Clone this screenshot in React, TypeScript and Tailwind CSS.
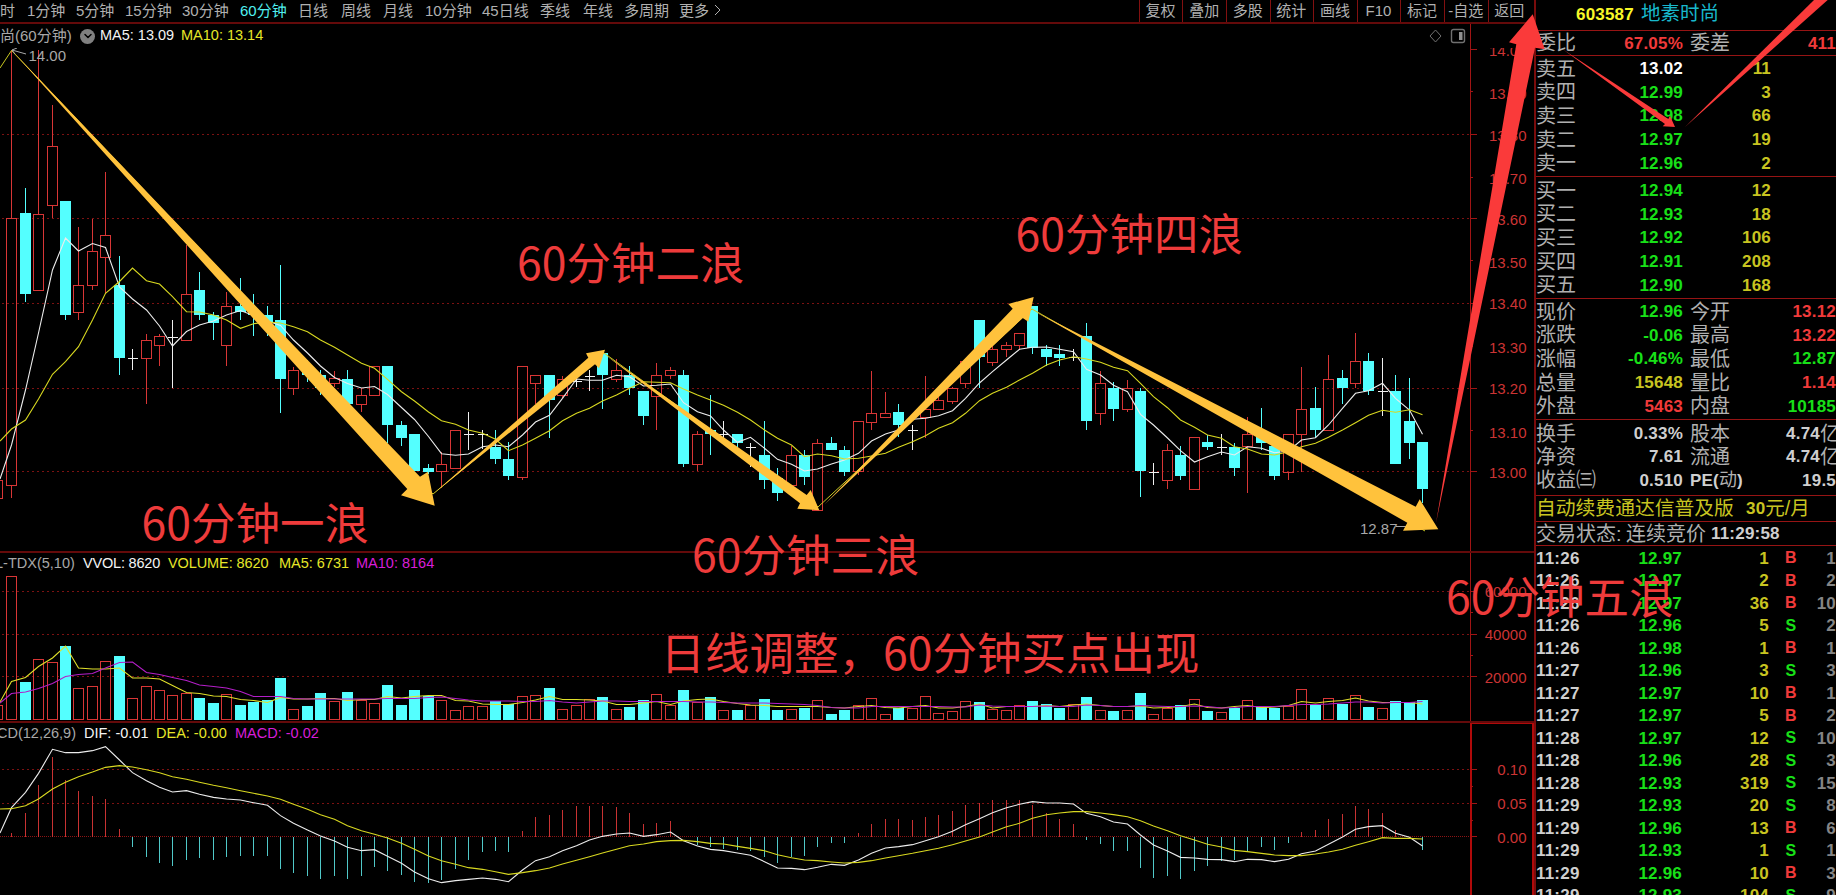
import React from 'react'
import { ChevronDown } from 'lucide-react'

type Kind = 'r' | 'c' | 'w'
type Candle = [Kind, number, number, number, number]

interface Tick {
  time: string
  price: string
  volume: string
  side: 'B' | 'S'
  count: string
}

const periods = [
  { label: '时', width: 'w-[27px]' },
  { label: '1分钟', width: 'w-[49px]' },
  { label: '5分钟', width: 'w-[49px]' },
  { label: '15分钟', width: 'w-[57px]' },
  { label: '30分钟', width: 'w-[58px]' },
  { label: '60分钟', width: 'w-[58px]', active: true },
  { label: '日线', width: 'w-[43px]' },
  { label: '周线', width: 'w-[42px]' },
  { label: '月线', width: 'w-[42px]' },
  { label: '10分钟', width: 'w-[57px]' },
  { label: '45日线', width: 'w-[58px]' },
  { label: '季线', width: 'w-[43px]' },
  { label: '年线', width: 'w-[41px]' },
  { label: '多周期', width: 'w-[55px]' },
  { label: '更多', width: 'w-[35px]' },
]

const tools = ['复权', '叠加', '多股', '统计', '画线', 'F10', '标记', '-自选', '返回']

// kind, high, body top, body bottom, low
const candles: Candle[] = [
  ['r', 50, 218, 486, 498], ['c', 188, 213, 294, 302], ['r', 50, 214, 291, 291], ['r', 105, 146, 206, 218],
  ['c', 201, 201, 315, 320], ['r', 227, 285, 313, 320], ['r', 219, 251, 286, 290], ['r', 172, 235, 258, 294],
  ['c', 256, 285, 358, 375], ['w', 349, 358, 358, 370], ['r', 334, 340, 359, 404], ['r', 334, 336, 346, 366],
  ['w', 320, 337, 337, 388], ['r', 245, 294, 341, 341], ['c', 272, 290, 315, 320], ['c', 312, 315, 323, 340],
  ['r', 292, 306, 346, 366], ['c', 278, 306, 312, 320], ['c', 294, 311, 315, 336], ['c', 306, 315, 323, 336],
  ['c', 265, 320, 379, 413], ['r', 367, 370, 389, 395], ['c', 360, 370, 375, 382], ['c', 370, 375, 388, 395],
  ['r', 371, 378, 384, 387], ['c', 370, 379, 404, 404], ['r', 388, 395, 405, 412], ['r', 366, 366, 396, 396],
  ['c', 366, 366, 425, 443], ['c', 421, 425, 438, 446], ['c', 434, 434, 471, 471], ['c', 464, 468, 472, 474],
  ['r', 452, 464, 472, 488], ['r', 430, 430, 469, 469], ['w', 412, 434, 434, 450], ['w', 430, 434, 434, 449],
  ['c', 430, 447, 459, 464], ['c', 442, 459, 476, 480], ['r', 366, 366, 478, 480], ['r', 375, 375, 384, 404],
  ['c', 375, 375, 400, 438], ['r', 376, 379, 396, 398], ['w', 376, 381, 381, 387], ['w', 370, 376, 376, 391],
  ['c', 353, 353, 375, 409], ['r', 359, 370, 380, 382], ['c', 366, 375, 388, 395], ['c', 391, 391, 416, 425],
  ['r', 363, 375, 397, 430], ['r', 367, 370, 376, 379], ['c', 370, 375, 464, 467], ['r', 431, 434, 465, 471],
  ['c', 395, 430, 434, 455], ['w', 421, 434, 434, 438], ['c', 434, 434, 443, 450], ['w', 443, 447, 447, 467],
  ['c', 421, 455, 480, 489], ['c', 468, 478, 493, 501], ['r', 446, 455, 486, 486], ['c', 450, 455, 477, 485],
  ['r', 439, 443, 511, 511], ['c', 437, 443, 450, 450], ['c', 446, 450, 472, 476], ['r', 421, 421, 472, 475],
  ['r', 371, 413, 423, 430], ['r', 392, 413, 418, 418], ['c', 404, 412, 425, 437], ['w', 425, 430, 430, 450],
  ['r', 376, 409, 418, 438], ['r', 395, 400, 410, 410], ['r', 387, 388, 402, 404], ['r', 361, 361, 384, 388],
  ['c', 320, 320, 357, 388], ['r', 345, 349, 363, 366], ['r', 342, 345, 350, 357], ['r', 333, 333, 346, 350],
  ['c', 306, 306, 348, 354], ['c', 345, 349, 357, 366], ['c', 345, 354, 358, 366], ['w', 349, 357, 357, 361],
  ['c', 323, 336, 421, 430], ['r', 371, 383, 414, 425], ['c', 382, 388, 409, 421], ['r', 380, 388, 410, 412],
  ['c', 388, 391, 471, 497], ['w', 463, 472, 472, 485], ['r', 444, 450, 481, 489], ['c', 446, 455, 476, 480],
  ['r', 437, 437, 490, 490], ['c', 435, 442, 447, 450], ['w', 434, 447, 447, 455], ['c', 443, 447, 468, 476],
  ['r', 417, 434, 447, 493], ['c', 408, 434, 443, 450], ['c', 443, 446, 476, 480], ['r', 434, 434, 473, 480],
  ['r', 367, 409, 435, 472], ['c', 387, 408, 430, 438], ['r', 355, 379, 431, 431], ['c', 370, 378, 388, 404],
  ['r', 333, 361, 384, 388], ['c', 353, 361, 391, 395], ['w', 358, 391, 391, 416], ['c', 375, 391, 464, 464],
  ['c', 378, 421, 443, 459], ['c', 442, 442, 489, 503],
]

const ma5 = [
  445, 390, 333, 270, 238, 251, 243.5, 247.5, 287, 299, 310, 326, 346, 331.5, 325, 321, 315, 310.5, 315.5, 321,
  325.5, 340, 353, 366, 377.5, 383.5, 388, 386.5, 394.5, 407.5, 419.5, 436.5, 453.7, 455.3, 454, 446.7, 445,
  446.7, 435, 422, 415.3, 398.3, 379, 380.3, 380.3, 375.3, 376.7, 386, 385.3, 384, 402.7, 411.7, 416, 430, 442.3,
  437.3, 448.3, 459.3, 464.3, 471, 469, 464, 460, 453.3, 441, 434, 430, 419.3, 418.3, 415.7, 410.7, 398.3, 383,
  371.7, 360, 349.3, 347.3, 347, 349.3, 351.7, 369.3, 375, 385.3, 391.7, 414.3, 425, 438, 450.7, 462, 456.7, 452,
  455, 446.7, 448.3, 452.7, 451, 440, 437.7, 425, 408.3, 393.3, 390.7, 383.3, 398.3, 410, 434.3,
]

const ma10 = [
  429, 420, 399, 374.3, 361.7, 346.7, 320, 293.3, 281.5, 268, 280.7, 284, 296.7, 311.7, 312, 315, 320, 328.3,
  323.7, 322, 323, 326.7, 331.7, 340, 347.3, 355, 363.3, 368.3, 379.3, 391.7, 401, 412, 420.7, 424.3, 430, 433.3,
  439.3, 450.7, 445, 438.3, 430.7, 420.7, 413.3, 408.3, 401, 395, 388.3, 381.7, 382.3, 382.7, 389, 395, 400,
  405.3, 412.3, 420, 430, 438.3, 445, 456.7, 454, 455.7, 459, 458.3, 456, 453.3, 447.3, 441.7, 435.7, 428.3,
  422.7, 413.3, 400.7, 393.3, 387.3, 380, 373.3, 365, 360, 356.7, 359, 362.3, 367.3, 370.7, 383.3, 396.7, 407.7,
  420, 427.3, 435, 438.3, 446.7, 449, 454, 455, 451.7, 446.7, 443.3, 437.3, 430, 422.7, 415.3, 410.3, 412.3,
  409.7, 414.7,
]

const volumeTops = [
  576, 682, 659, 662, 646, 688, 686, 661, 656, 698, 686, 690, 695, 693, 698, 703, 694, 705, 702, 700, 678, 709, 706,
  693, 701, 692, 700, 703, 685, 705, 690, 696, 700, 710, 706, 706, 701, 704, 696, 695, 688, 709, 705, 699, 697, 709,
  707, 700, 694, 705, 690, 702, 697, 710, 710, 705, 699, 710, 709, 708, 700, 714, 710, 705, 698, 714, 708, 708, 696,
  713, 711, 701, 702, 709, 710, 705, 701, 704, 708, 704, 697, 710, 711, 710, 693, 714, 708, 705, 699, 711, 712, 708,
  700, 707, 708, 706, 689, 705, 698, 704, 695, 707, 708, 701, 702, 700,
]

const volumeMa5 = [
  681.5, 677.5, 666.5, 658, 646, 668, 669, 669, 668, 678, 678, 679, 685.5, 692.5, 693.5, 696, 696.5, 699.5, 700.5,
  702.5, 697.5, 699, 699, 698.5, 698.5, 700.5, 699.5, 699.5, 696.5, 698, 696.5, 695.5, 695.5, 700.5, 701, 704,
  704.5, 704.5, 702.5, 700, 696.5, 699.5, 699.5, 700, 701, 704.5, 704.5, 703, 701.5, 704.5, 701, 699.5, 699, 701.5,
  703.5, 705, 705.5, 706.5, 706.5, 706.5, 706.5, 707.5, 708, 706.5, 705.5, 707.5, 708, 706.5, 705.5, 708, 708, 706.5,
  704, 708, 706.5, 706.5, 706.5, 705.5, 706.5, 705, 704, 705.5, 706.5, 706.5, 706, 708, 707.5, 706.5, 704, 707.5,
  708, 706.5, 705.5, 707.5, 707, 705.5, 701.5, 703, 701.5, 700.5, 698, 701, 702.5, 702.5, 702.5, 704,
]

const volumeMa10 = [
  693.5, 692, 688.5, 683.5, 676.5, 674.5, 673.5, 668, 662.5, 662, 672.5, 674.5, 677.5, 680.5, 685, 686.5, 688, 691.5,
  696.5, 696.5, 696.5, 698.5, 699, 699, 699, 699, 699, 699, 698.5, 698.5, 698.5, 697.5, 697, 698.5, 700, 701, 701, 701,
  701.5, 701.5, 700.5, 702, 703, 702, 701, 701, 701.5, 701.5, 701.5, 701.5, 701.5, 702, 702, 702.5, 703, 703, 703,
  703.5, 704, 704.5, 705.5, 707.5, 708, 708, 706.5, 706.5, 706.5, 706.5, 706.5, 706.5, 707, 707, 705, 706, 706.5, 706.5,
  706.5, 706, 706.5, 706.5, 705, 705.5, 706.5, 706.5, 705.5, 706, 706.5, 706.5, 706, 706.5, 708, 707.5, 706.5, 706.5,
  706.5, 705.5, 704.5, 704.5, 704, 703, 702, 702, 703, 702.5, 702.5, 701.5,
]

// MACD series are kept in thirds of a pixel below y = 540
const macdBars = [
  878, 818, 735, 652, 720, 753, 768, 776, 866, 922, 952, 970, 978, 960, 955, 960, 952, 948, 948, 948, 986, 1000, 1008,
  1016, 1008, 1016, 1008, 982, 993, 1004, 1027, 1030, 1020, 986, 960, 937, 934, 937, 873, 832, 825, 810, 798, 798,
  798, 802, 818, 852, 848, 844, 890, 916, 922, 927, 930, 934, 952, 970, 950, 948, 922, 908, 908, 878, 852, 836, 836,
  840, 832, 825, 813, 795, 788, 780, 780, 780, 795, 818, 836, 852, 900, 911, 934, 934, 983, 1013, 1008, 1016, 993,
  978, 963, 960, 934, 922, 930, 908, 877, 870, 836, 821, 798, 806, 818, 870, 890, 930,
]

const dif = [
  803, 757, 700, 628, 638, 638, 632, 620, 660, 698, 722, 742, 756, 752, 763, 772, 777, 780, 788, 796, 827, 850, 870,
  888, 903, 922, 932, 929, 949, 970, 996, 1016, 1028, 1022, 1018, 1014, 1018, 1025, 990, 962, 950, 932, 917, 900, 889,
  882, 879, 889, 884, 876, 902, 918, 928, 932, 939, 946, 965, 984, 985, 989, 982, 973, 976, 960, 940, 924, 920, 914,
  902, 890, 874, 854, 836, 818, 803, 793, 785, 789, 789, 792, 820, 830, 846, 852, 885, 915, 933, 952, 954, 958, 959,
  965, 958, 959, 965, 958, 941, 933, 913, 891, 868, 860, 857, 880, 892, 918,
]

const dea = [
  806, 797, 777, 747, 727, 710, 696, 682, 677, 681, 689, 698, 710, 718, 727, 736, 743, 752, 760, 768, 778, 793, 808,
  824, 838, 857, 872, 883, 894, 910, 928, 948, 962, 973, 983, 988, 995, 1003, 998, 992, 984, 972, 961, 950, 939, 928,
  917, 912, 905, 902, 901, 905, 910, 912, 919, 925, 932, 944, 953, 960, 962, 966, 969, 967, 962, 954, 947, 940, 932,
  925, 914, 903, 891, 876, 860, 850, 835, 824, 819, 815, 815, 819, 824, 830, 842, 858, 872, 887, 900, 913, 921, 931,
  935, 940, 945, 947, 947, 942, 936, 928, 916, 905, 893, 895, 895, 897,
]

const sells = [
  ['卖五', '13.02', '11'],
  ['卖四', '12.99', '3'],
  ['卖三', '12.98', '66'],
  ['卖二', '12.97', '19'],
  ['卖一', '12.96', '2'],
]

const buys = [
  ['买一', '12.94', '12'],
  ['买二', '12.93', '18'],
  ['买三', '12.92', '106'],
  ['买四', '12.91', '208'],
  ['买五', '12.90', '168'],
]

const RED = 'text-[#f03a3a]'
const GREEN = 'text-[#18e018]'
const YELLOW = 'text-[#c8c420]'
const LIGHT = 'text-[#cfcfcf]'
const LABEL = 'text-[20px] leading-none font-normal tracking-normal text-[#b0b0b0]'

const quotes = [
  ['现价', '12.96', GREEN, '今开', '13.12', RED],
  ['涨跌', '-0.06', GREEN, '最高', '13.22', RED],
  ['涨幅', '-0.46%', GREEN, '最低', '12.87', GREEN],
  ['总量', '15648', YELLOW, '量比', '1.14', RED],
  ['外盘', '5463', RED, '内盘', '10185', GREEN],
]

const basics = [
  ['换手', '0.33%', LIGHT, '股本', '4.74亿', LIGHT],
  ['净资', '7.61', LIGHT, '流通', '4.74亿', LIGHT],
  ['收益㈢', '0.510', LIGHT, 'PE(动)', '19.5', LIGHT],
]

const ticks: Tick[] = [
  { time: '11:26', price: '12.97', volume: '1', side: 'B', count: '1' },
  { time: '11:26', price: '12.97', volume: '2', side: 'B', count: '2' },
  { time: '11:26', price: '12.97', volume: '36', side: 'B', count: '10' },
  { time: '11:26', price: '12.96', volume: '5', side: 'S', count: '2' },
  { time: '11:26', price: '12.98', volume: '1', side: 'B', count: '1' },
  { time: '11:27', price: '12.96', volume: '3', side: 'S', count: '3' },
  { time: '11:27', price: '12.97', volume: '10', side: 'B', count: '1' },
  { time: '11:27', price: '12.97', volume: '5', side: 'B', count: '2' },
  { time: '11:28', price: '12.97', volume: '12', side: 'S', count: '10' },
  { time: '11:28', price: '12.96', volume: '28', side: 'S', count: '3' },
  { time: '11:28', price: '12.93', volume: '319', side: 'S', count: '15' },
  { time: '11:29', price: '12.93', volume: '20', side: 'S', count: '8' },
  { time: '11:29', price: '12.96', volume: '13', side: 'B', count: '6' },
  { time: '11:29', price: '12.93', volume: '1', side: 'S', count: '1' },
  { time: '11:29', price: '12.96', volume: '10', side: 'B', count: '3' },
  { time: '11:29', price: '12.93', volume: '104', side: 'S', count: '9' },
]

const colX = (i: number) => Math.floor(11.7 + i * 13.438)
const third = (v: number) => 540 + v / 3

const linePoints = (values: number[], start: number) =>
  `0,${start} ` + values.map((v, i) => `${colX(i) + 0.5},${v}`).join(' ')

function Line({ values, start, color }: { values: number[]; start: number; color: string }) {
  return <polyline points={linePoints(values, start)} fill="none" stroke={color} strokeWidth={1.1} />
}

function Grid({ ys }: { ys: number[] }) {
  return (
    <g stroke="#7c1212" strokeDasharray="2 3" shapeRendering="crispEdges">
      {ys.map(y => (
        <line key={y} x1={2} x2={1470} y1={y + 0.5} y2={y + 0.5} />
      ))}
    </g>
  )
}

function Axis({ labels, major, minor }: { labels: [string, number][]; major: number[]; minor: number[] }) {
  return (
    <g>
      <g stroke="#a01414" shapeRendering="crispEdges">
        {major.map(y => (
          <line key={y} x1={1471} x2={1477} y1={y + 0.5} y2={y + 0.5} />
        ))}
        {minor.map(y => (
          <line key={y} x1={1471} x2={1473} y1={y + 0.5} y2={y + 0.5} />
        ))}
      </g>
      <g fill="#cc3434" fontSize={15} textAnchor="end">
        {labels.map(([text, y]) => (
          <text key={text} x={1526.5} y={y + 5.5}>{text}</text>
        ))}
      </g>
    </g>
  )
}

function Bar({ i, kind, top, bottom }: { i: number; kind: Kind; top: number; bottom: number }) {
  const x = colX(i)
  if (kind === 'c') {
    return <rect x={x - 5} y={top} width={11} height={bottom - top} fill="#54ffff" />
  }
  return <rect x={x - 4.5} y={top + 0.5} width={10} height={bottom - top - 1} fill="none" stroke="#d83636" />
}

function CandleShape({ candle, i }: { candle: Candle; i: number }) {
  const [kind, high, top, bottom, low] = candle
  const x = colX(i) + 0.5
  if (kind === 'w') {
    return (
      <g stroke="#f0f0f0">
        <line x1={x} x2={x} y1={high} y2={low} />
        <line x1={x - 5} x2={x + 5} y1={top + 0.5} y2={top + 0.5} />
      </g>
    )
  }
  const color = kind === 'c' ? '#54ffff' : '#d83636'
  return (
    <g>
      <line x1={x} x2={x} y1={high} y2={top} stroke={color} />
      <line x1={x} x2={x} y1={bottom} y2={low} stroke={color} />
      <Bar i={i} kind={kind} top={top} bottom={bottom} />
    </g>
  )
}

function PricePanel() {
  return (
    <section className="flex flex-col h-[529px] border-b-2 border-[#640a0a]">
      <div className="flex h-6 shrink-0">
        <div className="flex flex-1 items-center whitespace-nowrap border-r border-[#a01414] text-[14.5px]">
          <span className="w-[80px] text-[15px] text-[#a8a8a8]">尚(60分钟)</span>
          <span className="mr-[5px] flex h-[15px] w-[15px] items-center justify-center rounded-full bg-[#808080]">
            <ChevronDown className="h-3 w-3 text-black" strokeWidth={3} />
          </span>
          <span className="w-[81px] text-[#f4f4f4]">MA5: 13.09</span>
          <span className="text-[#e6e628]">MA10: 13.14</span>
          <svg className="ml-auto mr-1" width="38" height="16" viewBox="0 0 38 16" fill="none" stroke="#707070">
            <path d="M7.5 2 L13 8 L7.5 14 L2 8 Z" />
            <rect x="23.5" y="1.5" width="13" height="13" rx="2" strokeWidth="1.4" />
            <rect x="31" y="4" width="3.5" height="8" fill="#909090" stroke="none" />
          </svg>
        </div>
        <div className="w-[63px]" />
      </div>
      <svg className="block shrink-0" width="1534" height="503" viewBox="0 48 1534 503">
        <Grid ys={[134, 218, 303, 388, 471]} />
        <line x1={1470.5} x2={1470.5} y1={48} y2={551} stroke="#a01414" />
        <g shapeRendering="crispEdges">
          <rect x={-7.5} y={480.5} width={10} height={18} fill="none" stroke="#d83636" />
          {candles.map((candle, i) => (
            <CandleShape key={i} candle={candle} i={i} />
          ))}
        </g>
        <Line values={ma5} start={479} color="#ececec" />
        <Line values={ma10} start={441} color="#d8d820" />
        {/* swing line between the extremes */}
        <polyline
          points="0,68 11.5,50.5 433,494 604,353 818,507 1032,309 1425,531"
          fill="none"
          stroke="#c8c820"
        />
        <path d="M26 54 L12 50 M12 50 l5 -2 M12 50 l3 4 M1396 526.5 h12" stroke="#a8a8a8" fill="none" />
        <text x={28.5} y={61} fontSize={15} fill="#a8a8a8">14.00</text>
        <text x={1360} y={533.5} fontSize={15} fill="#a8a8a8">12.87</text>
        <Axis
          labels={[
            ['14.00', 50], ['13.90', 93], ['13.80', 135], ['13.70', 178], ['13.60', 219], ['13.50', 262],
            ['13.40', 303.5], ['13.30', 347], ['13.20', 388.5], ['13.10', 432], ['13.00', 472],
          ]}
          major={[49, 134, 218, 303, 388, 471]}
          minor={[91, 177, 260, 346, 430]}
        />
      </svg>
    </section>
  )
}

function VolumePanel() {
  return (
    <section className="flex flex-col h-[170px] border-b-2 border-[#640a0a]">
      <div className="flex h-[22px] shrink-0">
        <div className="flex flex-1 items-center whitespace-nowrap border-r border-[#a01414] pb-px text-[14.5px]">
          <span className="-ml-[5px] w-[88px] text-[#a8a8a8]">L-TDX(5,10)</span>
          <span className="w-[85px] tracking-[-0.2px] text-[#f4f4f4]">VVOL: 8620</span>
          <span className="w-[111px] tracking-[-0.1px] text-[#e6e628]">VOLUME: 8620</span>
          <span className="w-[77px] text-[#e6e628]">MA5: 6731</span>
          <span className="text-[#d81ed8]">MA10: 8164</span>
        </div>
        <div className="w-[63px]" />
      </div>
      <svg className="block shrink-0" width="1534" height="146" viewBox="0 575 1534 146">
        <Grid ys={[591, 634, 676]} />
        <line x1={1470.5} x2={1470.5} y1={575} y2={721} stroke="#a01414" />
        <g shapeRendering="crispEdges">
          <rect x={-7.5} y={705.5} width={10} height={14} fill="none" stroke="#d83636" />
          {volumeTops.map((top, i) => (
            <Bar key={i} i={i} kind={candles[i][0] === 'c' ? 'c' : 'r'} top={top} bottom={720} />
          ))}
        </g>
        <Line values={volumeMa5} start={702} color="#e0e02a" />
        <Line values={volumeMa10} start={703} color="#b41ec8" />
        <Axis
          labels={[['60000', 591.5], ['40000', 634.5], ['20000', 677]]}
          major={[591, 634, 676]}
          minor={[612, 655]}
        />
      </svg>
    </section>
  )
}

function MacdPanel() {
  return (
    <section className="flex flex-col h-[172px]">
      <div className="flex h-[22px] shrink-0">
        <div className="flex flex-1 items-center whitespace-nowrap text-[14.5px]">
          <span className="-ml-[3px] w-[87px] text-[#a8a8a8]">CD(12,26,9)</span>
          <span className="w-[72px] text-[#f4f4f4]">DIF: -0.01</span>
          <span className="w-[79px] text-[#e6e628]">DEA: -0.00</span>
          <span className="text-[#d81ed8]">MACD: -0.02</span>
        </div>
        <div className="w-16 border-x-2 border-t border-[#b00a0a]" />
      </div>
      <svg className="block shrink-0" width="1534" height="150" viewBox="0 745 1534 150">
        <Grid ys={[769, 803]} />
        <line x1={0} x2={1470} y1={836.5} y2={836.5} stroke="#8c1414" strokeDasharray="1 1" shapeRendering="crispEdges" />
        <g shapeRendering="crispEdges">
          {macdBars.map((v, i) => (
            <line
              key={i}
              x1={colX(i) + 0.5}
              x2={colX(i) + 0.5}
              y1={836.5}
              y2={third(v)}
              stroke={v < 889 ? '#c83232' : '#50c8c8'}
            />
          ))}
          <line x1={1471} x2={1471} y1={745} y2={895} stroke="#b00a0a" strokeWidth={2} />
          <line x1={1533} x2={1533} y1={745} y2={895} stroke="#b00a0a" strokeWidth={2} />
        </g>
        <Line values={dif.map(third)} start={833} color="#ececec" />
        <Line values={dea.map(third)} start={809} color="#d8d820" />
        <Axis labels={[['0.10', 769.5], ['0.05', 803.5], ['0.00', 837]]} major={[769, 803, 836]} minor={[786, 820]} />
      </svg>
    </section>
  )
}

function OrderRow({ row, first }: { row: string[]; first: boolean }) {
  const [label, price, volume] = row
  return (
    <div className="flex min-h-0 flex-1 items-center">
      <span className={`w-[60px] ${LABEL}`}>{label}</span>
      <span className={`w-[87px] text-right ${first ? 'text-white' : GREEN}`}>{price}</span>
      <span className={`w-[88px] text-right ${YELLOW}`}>{volume}</span>
    </div>
  )
}

function QuoteRow({ row }: { row: string[] }) {
  const [label, value, color, label2, value2, color2] = row
  return (
    <div className="flex min-h-0 flex-1 items-center">
      <span className={`w-[60px] ${LABEL}`}>{label}</span>
      <span className={`w-[87px] text-right ${color}`}>{value}</span>
      {label2 === 'PE(动)' ? (
        <span className={`ml-[7px] flex w-[60px] items-center ${LIGHT}`}>
          PE(<span className="text-[18px] font-normal tracking-normal text-[#b0b0b0]">动</span>)
        </span>
      ) : (
        <span className={`ml-[7px] w-[60px] ${LABEL}`}>{label2}</span>
      )}
      <span className={`flex flex-1 items-center justify-end ${color2}`}>
        {value2.endsWith('亿') ? (
          <>
            {value2.slice(0, -1)}
            <span className={`-mr-1 ${LABEL}`}>亿</span>
          </>
        ) : value2}
      </span>
    </div>
  )
}

function QuotePanel() {
  return (
    <aside className="flex w-[302px] shrink-0 flex-col overflow-hidden whitespace-nowrap border-l-2 border-[#7a0c0c] text-[17px] leading-none font-bold tracking-[0.2px] *:shrink-0">
      <div className="flex h-[30px] items-center pb-0.5 pl-[40px]">
        <span className="w-[65px] text-[#f8f828]">603587</span>
        <span className="text-[19.5px] font-normal tracking-normal text-[#18b8cc]">地素时尚</span>
      </div>
      <div className="flex h-[25px] items-center border-t border-[#961414]">
        <span className={`w-[60px] ${LABEL}`}>委比</span>
        <span className={`w-[87px] text-right ${RED}`}>67.05%</span>
        <span className={`ml-[7px] w-[60px] ${LABEL}`}>委差</span>
        <span className={`flex-1 text-right ${RED}`}>411</span>
      </div>
      <div className="flex h-[121px] flex-col border-t border-[#961414] pt-[1px] pb-[1px]">
        {sells.map((row, i) => <OrderRow key={row[0]} row={row} first={i === 0} />)}
      </div>
      <div className="flex h-[122px] flex-col border-t border-[#961414] pt-[2px] pb-[1px]">
        {buys.map(row => <OrderRow key={row[0]} row={row} first={false} />)}
      </div>
      <div className="flex h-[121px] flex-col border-t border-[#961414] pt-[1px] pb-[1px]">
        {quotes.map(row => <QuoteRow key={row[0]} row={row} />)}
      </div>
      <div className="flex h-[76px] flex-col border-t border-[#961414] pt-[2px] pb-[3px]">
        {basics.map(row => <QuoteRow key={row[0]} row={row} />)}
      </div>
      <div className={`flex h-[26px] items-center border-t border-[#961414] ${YELLOW}`}>
        <span className="w-[210px] text-[19.8px] font-normal tracking-normal">自动续费通达信普及版</span>
        <span>30</span>
        <span className="text-[19.5px] font-normal tracking-normal">元/月</span>
      </div>
      <div className="flex h-6 items-center border-t border-[#961414]">
        <span className={`w-[90px] ${LABEL}`}>交易状态:</span>
        <span className={`w-[85px] ${LABEL}`}>连续竞价</span>
        <span className={LIGHT}>11:29:58</span>
      </div>
      <div className="flex flex-col border-t border-[#961414] pt-[1px]">
        {ticks.map((tick, i) => (
          <div key={i} className="flex h-[22.5px] items-center">
            <span className={`w-[60px] ${LIGHT}`}>{tick.time}</span>
            <span className={`w-[86px] text-right ${GREEN}`}>{tick.price}</span>
            <span className={`w-[87px] text-right ${YELLOW}`}>{tick.volume}</span>
            <span className={`ml-[16px] w-[12px] text-center text-[16px] ${tick.side === 'B' ? RED : GREEN}`}>{tick.side}</span>
            <span className="flex-1 text-right text-[#858585]">{tick.count}</span>
          </div>
        ))}
      </div>
    </aside>
  )
}

function Annotations() {
  return (
    <svg className="pointer-events-none absolute inset-0" width="1836" height="895" viewBox="0 0 1836 895">
      <g fill="#ffc23c">
        <polygon points="11.5,50 236.5,300 407.3,489 401,495.3 434.7,505.7 428,471.7 420,476.7 250,300" />
        <polygon points="433,494 588.3,357.7 586,353.3 605,349.7 599,368.3 595,364.3" />
        <polygon points="604,354 806.7,495 810.7,490 819.3,510.3 797.3,508.7 800,503.3" />
        <polygon points="825,504 1012.7,308.7 1008.3,304 1033.7,297 1028.3,321.7 1022.7,318" />
        <polygon points="1032,310 1415.7,506.7 1419.7,499.3 1438.3,529.3 1403,530.7 1407.3,522.7" />
      </g>
      <g fill="#fa3a3a">
        <polygon points="1436,523 1516.3,44.3 1509,42.3 1532.7,14.3 1544.7,49.3 1535,47.7" />
        <polygon points="1562.7,49.3 1668.3,119 1670,115.7 1675,127 1662.7,126.3 1665,124" />
        <polygon points="1685,127 1814,0 1827.7,0" />
      </g>
      <g fill="#ee3b3b" fontSize={44.5} fontFamily="'Noto Sans CJK SC', sans-serif">
        <text x={141.5} y={540}>60分钟一浪</text>
        <text x={517} y={280}>60分钟二浪</text>
        <text x={692} y={572}>60分钟三浪</text>
        <text x={1015.5} y={251}>60分钟四浪</text>
        <text x={1446} y={614}>60分钟五浪</text>
        <text x={660.5} y={669.5}>日线调整，60分钟买点出现</text>
      </g>
    </svg>
  )
}

export default function App() {
  return (
    <div className="relative flex h-[895px] w-[1836px] overflow-hidden bg-black font-['Liberation_Sans','Noto_Sans_CJK_SC',sans-serif]">
      <main className="flex w-[1534px] shrink-0 flex-col overflow-hidden">
        <header className="flex h-6 shrink-0 items-center justify-between whitespace-nowrap border-b-2 border-[#640a0a] text-[15px] leading-none text-[#b0b0b0]">
          <nav className="flex items-center pb-0.5">
            {periods.map(({ label, width, active }) => (
              <span key={label} className={`${width} ${active ? 'text-[#50f0f0]' : ''}`}>{label}</span>
            ))}
            <svg width="7" height="12" viewBox="0 0 7 12" fill="none" stroke="#b0b0b0">
              <path d="M1 1 L6 6 L1 11" />
            </svg>
          </nav>
          <div className="flex h-full">
            {tools.map(tool => (
              <span key={tool} className="flex w-[43.6px] items-center justify-center border-l border-[#821010] pr-px pb-0.5 last:w-[46.5px] last:pr-1">
                {tool}
              </span>
            ))}
          </div>
        </header>
        <PricePanel />
        <VolumePanel />
        <MacdPanel />
      </main>
      <QuotePanel />
      <Annotations />
    </div>
  )
}
